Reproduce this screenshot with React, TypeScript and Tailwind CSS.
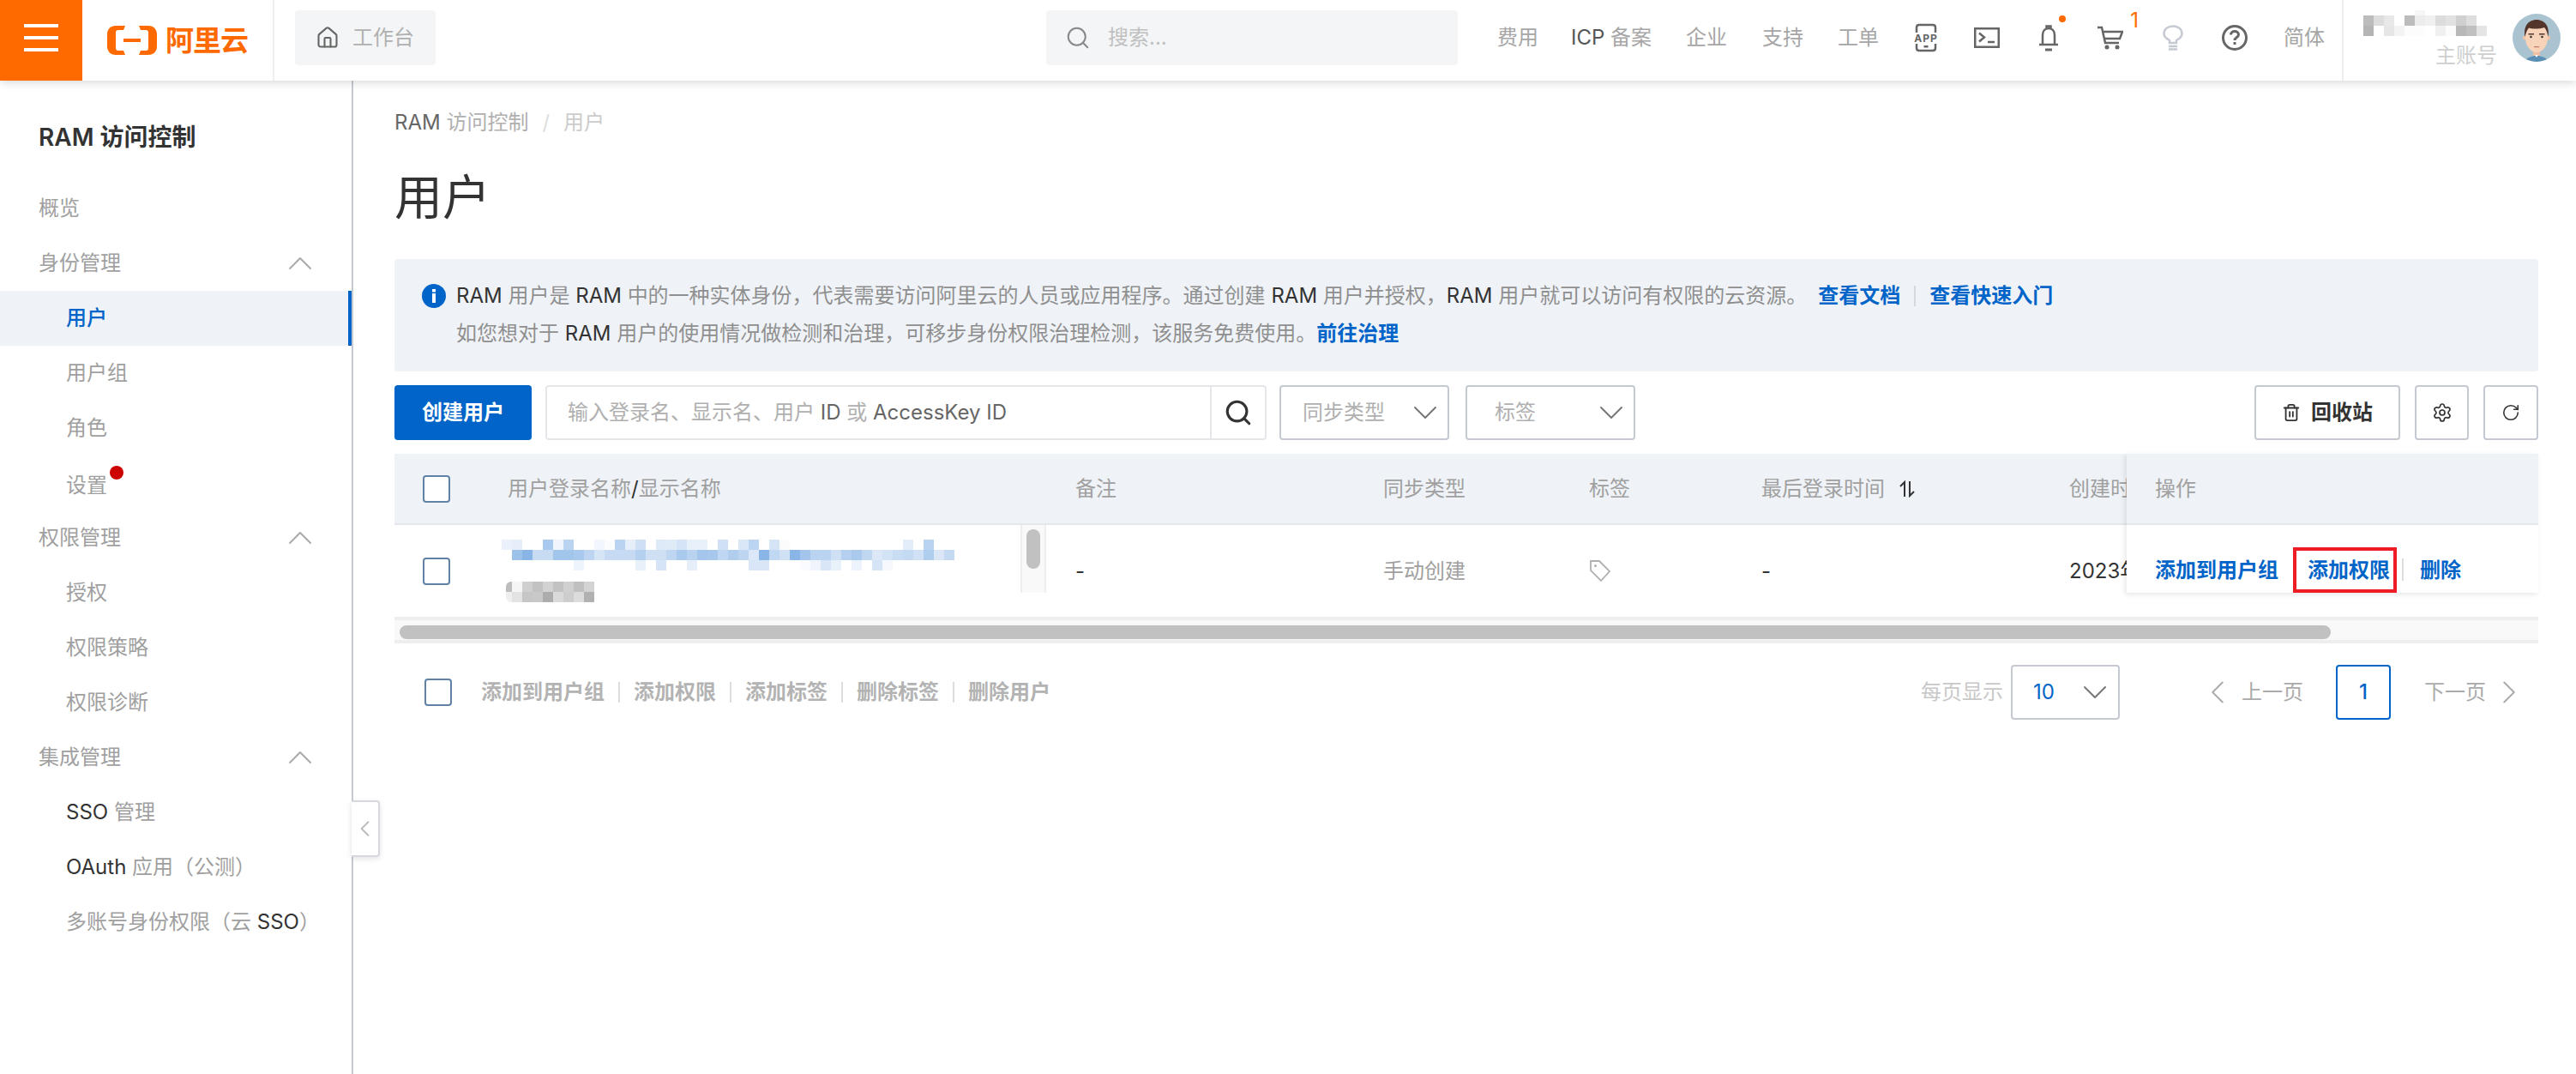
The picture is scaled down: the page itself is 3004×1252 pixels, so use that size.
import { ChevronDown, ChevronLeft, ChevronRight, ChevronUp, House, RotateCw, Search, Settings, Trash2 } from "lucide-react";

const font = "font-['Inter','Noto_Sans_CJK_SC',sans-serif]";

const blueRows = [
  ["#eaf1fa","#e5eef9","#fff","#fff","#a9caee","#f0f5fd","#b9d3f0","#fff","#fff","#f2f6fd","#fbfcfe","#b9d3f0","#e5eef9","#cfe0f4","#fff","#dfeaf8","#e0ebf8","#d5e4f6","#e8f0fa","#e8f0fa","#fff","#d0e1f5","#fff","#dae7f7","#bbd4f1","#fff","#d6e5f6","#fbfbfb","#fff","#fff","#fff","#fff","#fff","#fff","#fff","#fff","#fff","#fff","#fff","#e3edf9","#fff","#b9d3f0"],
  ["#fff","#9dc2ea","#88b5e6","#c7dcf3","#c7dcf3","#a2c5eb","#a2c5eb","#a8c9ed","#bdd5f1","#d6e5f6","#c6dbf3","#c6dbf3","#c6dbf3","#b6d1f0","#cfe0f5","#cfe0f5","#bfd6f2","#a9caed","#b8d2f0","#a4c6ec","#a7c8ec","#bfd7f2","#b0cdee","#bdd5f1","#dce8f7","#8ab6e7","#c1d8f2","#d0e1f5","#8ab6e7","#a3c5eb","#bad3f0","#bad3f0","#cfe0f5","#b4cfef","#a9caed","#c0d7f2","#dce8f7","#d3e3f6","#c8dcf4","#c4daf3","#d0e1f5","#afcdee","#dbe7f7","#c4daf3"],
  ["#fff","#fff","#fff","#fff","#fff","#fff","#fff","#eef4fc","#fff","#fff","#fff","#fff","#fff","#e8f0fa","#fff","#d5e4f6","#fff","#fff","#e5eef9","#fff","#fff","#fff","#fff","#fff","#d9e6f7","#d9e6f7","#fff","#fff","#fff","#fafbfe","#f0f5fd","#d9e6f7","#e8f0fa","#fff","#ecf3fc","#fff","#d6e5f6","#f6f8fe"],
];
const grayRows = [
  ["#bdbdbd","#f5f5f5","#cfcfcf","#c2c2c2","#d2d2d2","#c2c2c2","#d0d0d0","#c0c0c0","#d3d3d3"],
  ["#efefef","#e3e3e3","#c6c6c6","#c8c8c8","#acacac","#dadada","#cdcdcd","#dcdcdc","#b1b1b1"],
];
const nameRows = [
  ["#bcbcbc","#dcdcdc","#e8e8e8","#fff","#bcbcbc","#ececec","#f0f0f0","#dcdcdc","#e2e2e2","#d0d0d0","#dedede","#fff"],
  ["#b4b4b4","#fff","#e6e6e6","#f3f3f3","#fcfcfc","#fcfcfc","#fff","#f0f0f0","#fbfbfb","#b8b8b8","#c0c0c0","#e4e4e4"],
];

function Mosaic({ rows }: { rows: string[][] }) {
  return (
    <div className="flex flex-col">
      {rows.map((row, i) => (
        <div key={i} className="flex">
          {row.map((c, j) => (
            <div key={j} className="h-3 w-3 shrink-0" style={{ backgroundColor: c }} />
          ))}
        </div>
      ))}
    </div>
  );
}

function Checkbox() {
  return <div className="h-[32px] w-[32px] shrink-0 rounded-[4px] border-2 border-[#5f82a6] bg-white" />;
}

const Header = () => {
  return (
    <header className="relative z-20 flex h-[94px] items-stretch bg-white shadow-[0_2px_10px_rgba(0,0,0,0.16)]">
      <div className="flex w-[96px] items-center justify-center bg-[#ff6a00] pb-[6px]">
        <div className="flex w-[40px] flex-col gap-[10px]">
          <div className="h-[4px] bg-white" />
          <div className="h-[4px] bg-white" />
          <div className="h-[4px] bg-white" />
        </div>
      </div>
      <div className="flex w-[224px] items-center gap-[9px] border-r-2 border-[#eeeeee] pl-[28px]">
        <svg viewBox="0 0 60 36" className="h-[36px] w-[60px]">
          <path d="M22 1H11C5 1 1 5 1 11V25C1 31 5 35 11 35H22L20 30H14C12 30 11 29 11 27V9C11 7 12 6 14 6H20Z" fill="#ff6a00" />
          <path d="M38 1H49C55 1 59 5 59 11V25C59 31 55 35 49 35H38L40 30H46C48 30 49 29 49 27V9C49 7 48 6 46 6H40Z" fill="#ff6a00" />
          <rect x="20" y="16" width="20" height="4" fill="#ff6a00" />
        </svg>
        <span className="text-[33px] leading-none font-bold tracking-[-1px] text-[#ff6a00]">阿里云</span>
      </div>
      <div className="flex items-center pb-[6px] pl-[24px]">
        <div className="flex h-[64px] w-[164px] items-center gap-[15px] rounded-[4px] bg-[#f4f5f7] pl-[24px]">
          <House size={28} strokeWidth={1.800} className="text-[#666]" />
          <span className="text-[24px] text-[#b0b0b0]">工作台</span>
        </div>
      </div>
      <div className="ml-[712px] flex items-center pb-[6px]">
        <div className="flex h-[64px] w-[480px] items-center gap-[20px] rounded-[4px] bg-[#f4f5f7] pl-[22px]">
          <Search size={30} strokeWidth={1.600} className="text-[#888]" />
          <span className="text-[24px] text-[#c0c0c0]">搜索...</span>
        </div>
      </div>
      <nav className="ml-[46px] flex items-center pb-[6px] text-[24px] text-[#a6a6a6]">
        <span className="w-[86px]">费用</span>
        <span className="w-[134px]"><span className="text-[#555]">ICP</span> 备案</span>
        <span className="w-[89px]">企业</span>
        <span className="w-[88px]">支持</span>
        <span className="w-[87px]">工单</span>
        <svg viewBox="0 0 32 34" className="h-[34px] w-[32px]" fill="none" stroke="#666" strokeWidth="2.500">
          <path d="M5 11V5C5 3 6 2 8 2H24C26 2 27 3 27 5V11M5 24V29C5 31 6 32 8 32H24C26 32 27 31 27 29V24" />
          <text x="16" y="21.500" textAnchor="middle" fontSize="12" fontWeight="700" letterSpacing="1" fill="#666" stroke="none">APP</text>
          <rect x="13.500" y="26" width="5" height="2.500" fill="#666" stroke="none" />
        </svg>
        <svg viewBox="0 0 30 24" className="ml-[40px] h-[24px] w-[30px]" fill="none" stroke="#666" strokeWidth="2.500">
          <rect x="1.250" y="1.250" width="27.500" height="21.500" />
          <path d="M6 6.500L12 11.500L6 16.500" />
          <path d="M16 17H24" />
        </svg>
        <div className="relative ml-[45px] h-[32px] w-[24px]">
          <svg viewBox="0 0 24 32" className="h-[32px] w-[24px]" fill="none" stroke="#666" strokeWidth="2.500">
            <path d="M9.500 4.500V2.500H14.500V4.500M5 23V13C5 8 8 5 12 5C16 5 19 8 19 13V23" />
            <path d="M1 24H23" />
            <path d="M8 30H16" strokeWidth="3" />
          </svg>
          <div className="absolute right-[-8px] top-[-10px] h-[8px] w-[8px] rounded-full bg-[#ff6a00]" />
        </div>
        <div className="relative ml-[45px] h-[28px] w-[30px]">
          <svg viewBox="0 0 30 28" className="h-[28px] w-[30px]" fill="none" stroke="#666" strokeWidth="2.500">
            <path d="M0 2H5L9 20H25M6.500 7H29L26 15H8.500" />
            <circle cx="11" cy="25" r="2.500" fill="#666" stroke="none" />
            <circle cx="23" cy="25" r="2.500" fill="#666" stroke="none" />
          </svg>
          <span className="absolute right-[-18px] top-[-20px] text-[24px] leading-[28px] text-[#ff6a00]">1</span>
        </div>
        <svg viewBox="0 0 24 30" className="ml-[46px] h-[30px] w-[24px]" fill="none" stroke="#c5cad2" strokeWidth="2.500">
          <path d="M8 21V18C4 16 1.500 13.500 1.500 10C1.500 5 6 1.500 12 1.500C18 1.500 22.500 5 22.500 10C22.500 13.500 20 16 16 18V21Z" />
          <path d="M7 25H17M7 28.500H17" strokeWidth="2.500" />
        </svg>
        <svg viewBox="0 0 30 30" className="ml-[45px] h-[30px] w-[30px]" fill="none" stroke="#666" strokeWidth="3">
          <circle cx="15" cy="15" r="13.500" />
          <path d="M10.500 11.500C10.500 9 12.500 7.500 15 7.500C17.500 7.500 19.500 9 19.500 11.500C19.500 14.500 15 14.500 15 18" />
          <rect x="13.500" y="20" width="3" height="3" fill="#666" stroke="none" />
        </svg>
        <span className="ml-[42px] w-[68px]">简体</span>
      </nav>
      <div className="flex flex-1 items-stretch border-l-2 border-[#eeeeee]">
        <div className="relative flex w-[197px] flex-col pl-[23px] pt-[18px]">
          <div className="absolute left-[83px] top-[12px] h-[6px] w-3 bg-[#f6f6f6]" />
          <Mosaic rows={nameRows} />
          <span className="mt-[5px] self-end pr-[18px] text-[24px] leading-[36px] text-[#cfcfcf]">主账号</span>
        </div>
        <div className="flex items-center pb-[6px]">
          <svg viewBox="0 0 56 56" className="h-[56px] w-[56px] rounded-full bg-[#aac3d0]">
            <path d="M15 56C16 51 22 49 28 49C34 49 40 51 41 56Z" fill="#5b8fb5" />
            <rect x="24" y="40" width="8" height="9" fill="#eebfa2" />
            <path d="M26 48H30L28 51Z" fill="#fff" />
            <circle cx="14.500" cy="28" r="2.500" fill="#f2c4a8" />
            <circle cx="41.500" cy="28" r="2.500" fill="#f2c4a8" />
            <ellipse cx="28" cy="28" rx="13" ry="17" fill="#f7d3ba" />
            <path d="M14.500 27C12 13 20 7 28 7C36 7 44 13 41.500 27C40.500 21 39 18 37 16C31 18 23 18 19 16.500C17 19 15.500 22 14.500 27Z" fill="#53352c" />
            <rect x="18.500" y="23" width="6.500" height="1.500" fill="#53352c" />
            <rect x="31" y="23" width="6.500" height="1.500" fill="#53352c" />
            <circle cx="21.500" cy="27" r="1.300" fill="#333" />
            <circle cx="34.500" cy="27" r="1.300" fill="#333" />
            <rect x="25" y="38" width="6" height="1.200" fill="#c07a66" />
          </svg>
        </div>
      </div>
    </header>
  );
};

const MenuHead = ({ label }: { label: string }) => {
  return (
    <div className="flex h-[64px] items-center justify-between pl-[45px] pr-[36px] text-[#a0a0a0]">
      <span>{label}</span>
      <ChevronUp size={48} strokeWidth={1} className="text-[#aaa]" />
    </div>
  );
};

const MenuItem = ({ children }: { children: React.ReactNode }) => {
  return <div className="flex h-[64px] items-center pl-[77px] text-[#a0a0a0]">{children}</div>;
};

const Sidebar = () => {
  return (
    <aside className="relative w-[412px] shrink-0 border-r-2 border-[#c5cad2] pt-[44px] text-[24px]">
      <div className="h-[44px] pl-[45px] text-[28px] leading-[44px] font-semibold text-[#333]">RAM 访问控制</div>
      <div className="mt-[29px] flex flex-col">
        <div className="flex h-[64px] items-center pl-[45px] text-[#a0a0a0]">概览</div>
        <MenuHead label="身份管理" />
        <div className="flex h-[64px] items-center border-r-4 border-[#0064c8] bg-[#eff3f8] pl-[77px] font-medium text-[#0064c8]">用户</div>
        <MenuItem>用户组</MenuItem>
        <MenuItem>角色</MenuItem>
        <MenuItem>
          <span className="relative top-[3px]">
            设置
            <span className="absolute right-[-19px] top-[-5px] h-[16px] w-[16px] rounded-full bg-[#cc0000]" />
          </span>
        </MenuItem>
        <MenuHead label="权限管理" />
        <MenuItem>授权</MenuItem>
        <MenuItem>权限策略</MenuItem>
        <MenuItem>权限诊断</MenuItem>
        <MenuHead label="集成管理" />
        <MenuItem><span><span className="text-[#333]">SSO</span> 管理</span></MenuItem>
        <MenuItem><span><span className="text-[#333]">OAuth</span> 应用（公测）</span></MenuItem>
        <MenuItem><span>多账号身份权限（云 <span className="text-[#333]">SSO</span>）</span></MenuItem>
      </div>
      <div className="absolute left-[410px] top-[839px] flex h-[66px] w-[33px] items-center justify-center rounded-r-[4px] border-2 border-l-0 border-[#d5d8dd] bg-white shadow-[0_2px_6px_rgba(0,0,0,0.12)]">
        <ChevronLeft size={34} strokeWidth={1.400} className="text-[#bbb]" />
      </div>
    </aside>
  );
};

const BoxButton = ({ className, children }: { className: string; children: React.ReactNode }) => {
  return (
    <div className={`flex h-[64px] items-center rounded-[4px] border-2 border-[#c5cad2] bg-white ${className}`}>
      {children}
    </div>
  );
};

const Table = () => {
  return (
    <div className="relative mt-[16px] text-[24px]">
      <div className="flex h-[83px] items-center border-b-2 border-[#e4e6e9] bg-[#eff3f8] text-[#a0a0a0]">
        <div className="flex w-[132px] shrink-0 pl-[33px]"><Checkbox /></div>
        <div className="w-[662px] shrink-0">用户登录名称<span className="text-[#333]">/</span>显示名称</div>
        <div className="w-[359px] shrink-0">备注</div>
        <div className="w-[240px] shrink-0">同步类型</div>
        <div className="w-[201px] shrink-0">标签</div>
        <div className="flex w-[359px] shrink-0 items-center gap-[16px]">
          最后登录时间
          <svg viewBox="0 0 20 20" className="h-[20px] w-[20px]" fill="none" stroke="#333" strokeWidth="2">
            <path d="M7 19V2L2 7M13 1V18L18 13" />
          </svg>
        </div>
        <div className="whitespace-nowrap">创建时间</div>
      </div>
      <div className="flex h-[107px] items-center text-[#a0a0a0]">
        <div className="flex w-[132px] shrink-0 pl-[33px]"><Checkbox /></div>
        <div className="relative flex h-full w-[662px] shrink-0 flex-col pt-[17px]">
          <div className="ml-[-7px] w-[540px] overflow-hidden"><Mosaic rows={blueRows} /></div>
          <div className="ml-[-2px] mt-[13px] w-[105px] overflow-hidden rounded-l-[6px]">
            <div className="ml-[-5px]"><Mosaic rows={grayRows} /></div>
          </div>
          <div className="absolute left-[598px] top-0 h-[79px] w-[30px] border-x-2 border-[#eeeeee] bg-[#f9f9f9]">
            <div className="ml-[5px] mt-[5px] h-[46px] w-[16px] rounded-full bg-[#c1c1c1]" />
          </div>
        </div>
        <div className="w-[359px] shrink-0 text-[#333]">-</div>
        <div className="w-[240px] shrink-0">手动创建</div>
        <div className="w-[201px] shrink-0">
          <svg viewBox="0 0 26 27" className="h-[27px] w-[26px]" fill="none" stroke="#b0b0b0" strokeWidth="1.800">
            <path d="M2 2H12L24 14L14 25L2 13Z" />
            <circle cx="7.500" cy="7.500" r="1.500" fill="#b0b0b0" stroke="none" />
          </svg>
        </div>
        <div className="w-[359px] shrink-0 text-[#333]">-</div>
        <div className="whitespace-nowrap text-[#333]">2023年</div>
      </div>
      <div className="h-[31px] border-y-4 border-y-[#eeeeee] bg-[#f9f9f9] py-[6px] pl-[6px]">
        <div className="h-[16px] w-[2252px] rounded-full bg-[#c1c1c1]" />
      </div>

      <div className="absolute right-0 top-0 h-[162px] w-[480px] bg-white shadow-[-2px_2px_6px_rgba(0,0,0,0.1)]">
        <div className="flex h-[83px] items-center border-b-2 border-[#e4e6e9] bg-[#eff3f8] pl-[33px] text-[#a0a0a0]">操作</div>
        <div className="flex h-[79px] items-end pl-[33px] font-semibold text-[#0064c8]">
          <span className="flex h-[53px] w-[143px] items-center whitespace-nowrap">添加到用户组</span>
          <div className="ml-[18px] flex h-[53px] w-[121px] items-center border-4 border-[#ee1c25] pl-[13px]">添加权限</div>
          <div className="mb-[14px] ml-[6px] h-[26px] w-[2px] bg-[#dddddd]" />
          <span className="ml-[19px] flex h-[53px] items-center">删除</span>
        </div>
      </div>
    </div>
  );
};

const Pagination = () => {
  const sep = <div className="h-[24px] w-[2px] bg-[#dddddd]" />;
  return (
    <div className="mt-[25px] flex h-[64px] items-center pr-[11px] text-[24px]">
      <div className="pl-[35px]"><Checkbox /></div>
      <div className="ml-[34px] flex items-center gap-[16px] font-semibold text-[#b3b3b3]">
        <span>添加到用户组</span>{sep}
        <span>添加权限</span>{sep}
        <span>添加标签</span>{sep}
        <span>删除标签</span>{sep}
        <span>删除用户</span>
      </div>
      <div className="ml-auto flex items-center">
        <span className="text-[#c8c8c8]">每页显示</span>
        <div className="ml-[9px] flex h-[64px] w-[127px] items-center justify-between rounded-[4px] border-2 border-[#c5cad2] pl-[24px] pr-[3px]">
          <span className="text-[#0064c8]">10</span>
          <ChevronDown size={48} strokeWidth={1} className="text-[#777]" />
        </div>
        <ChevronLeft size={46} strokeWidth={1} className="ml-[91px] text-[#aaa]" />
        <span className="ml-[5px] text-[#aaa]">上一页</span>
        <div className="ml-[38px] flex h-[64px] w-[64px] items-center justify-center rounded-[4px] border-2 border-[#0064c8] font-medium text-[#0064c8]">1</div>
        <span className="ml-[39px] text-[#aaa]">下一页</span>
        <ChevronRight size={46} strokeWidth={1} className="ml-[4px] text-[#aaa]" />
      </div>
    </div>
  );
};

export default function App() {
  return (
    <div className={`flex h-[1252px] w-[3004px] flex-col overflow-hidden bg-white ${font}`}>
      <Header />
      <div className="flex flex-1">
        <Sidebar />
        <main className="flex-1 pl-[48px] pr-[44px]">
          <div className="mt-[32px] flex h-[34px] items-center gap-[16px] text-[24px] leading-[34px] text-[#b0b0b0]">
            <span><span className="text-[#666]">RAM</span> 访问控制</span>
            <span className="text-[#ddd]">/</span>
            <span className="text-[#ccc]">用户</span>
          </div>
          <h1 className="mt-[34px] h-[72px] text-[56px] leading-[72px] text-[#333]">用户</h1>
          <div className="mt-[36px] h-[131px] rounded-[4px] bg-[#eff3f8] pl-[32px] pt-[21px] text-[24px] leading-[44px] text-[#8f8f8f]">
            <div className="flex items-center gap-[12px]">
              <svg viewBox="0 0 28 28" className="h-[28px] w-[28px]">
                <circle cx="14" cy="14" r="14" fill="#0064c8" />
                <rect x="12" y="11" width="4" height="11" fill="#fff" />
                <rect x="12" y="6" width="4" height="3.500" fill="#fff" />
              </svg>
              <span className="whitespace-nowrap">
                <span className="text-[#333]">RAM</span> 用户是 <span className="text-[#333]">RAM</span> 中的一种实体身份，代表需要访问阿里云的人员或应用程序。通过创建 <span className="text-[#333]">RAM</span> 用户并授权，<span className="text-[#333]">RAM</span> 用户就可以访问有权限的云资源。
              </span>
              <span className="ml-[1px] font-semibold text-[#0064c8]">查看文档</span>
              <span className="mx-[4px] h-[24px] w-[2px] bg-[#d5d8dd]" />
              <span className="font-semibold text-[#0064c8]">查看快速入门</span>
            </div>
            <div className="pl-[40px]">
              如您想对于 <span className="text-[#333]">RAM</span> 用户的使用情况做检测和治理，可移步身份权限治理检测，该服务免费使用。<span className="font-semibold text-[#0064c8]">前往治理</span>
            </div>
          </div>
          <div className="mt-[16px] flex h-[64px] items-stretch text-[24px]">
            <div className="flex w-[160px] items-center justify-center rounded-[4px] bg-[#0064c8] font-semibold text-white">创建用户</div>
            <div className="ml-[16px] flex w-[841px] rounded-[4px] border-2 border-[#e4e6e9]">
              <div className="flex flex-1 items-center pl-[24px] text-[#b0b0b0]"><span>输入登录名、显示名、用户 <span className="text-[#666]">ID</span> 或 <span className="text-[#666]">AccessKey ID</span></span></div>
              <div className="flex w-[64px] items-center justify-center border-l-2 border-[#e4e6e9]">
                <Search size={34} strokeWidth={2.200} className="text-[#333]" />
              </div>
            </div>
            <BoxButton className="ml-[15px] w-[198px] justify-between pl-[25px] pr-[2px] text-[#b0b0b0]">
              同步类型
              <ChevronDown size={48} strokeWidth={1} className="text-[#777]" />
            </BoxButton>
            <BoxButton className="ml-[19px] w-[198px] justify-between pl-[32px] pr-[2px] text-[#b0b0b0]">
              标签
              <ChevronDown size={48} strokeWidth={1} className="text-[#777]" />
            </BoxButton>
            <BoxButton className="ml-auto w-[170px] justify-center gap-[12px] font-semibold text-[#333]">
              <Trash2 size={22} strokeWidth={2} />
              回收站
            </BoxButton>
            <BoxButton className="ml-[17px] w-[63px] justify-center"><Settings size={24} strokeWidth={1.700} className="text-[#333]" /></BoxButton>
            <BoxButton className="ml-[17px] w-[64px] justify-center"><RotateCw size={22} strokeWidth={1.700} className="text-[#333]" /></BoxButton>
          </div>
          <Table />
          <Pagination />
        </main>
      </div>
    </div>
  );
}
